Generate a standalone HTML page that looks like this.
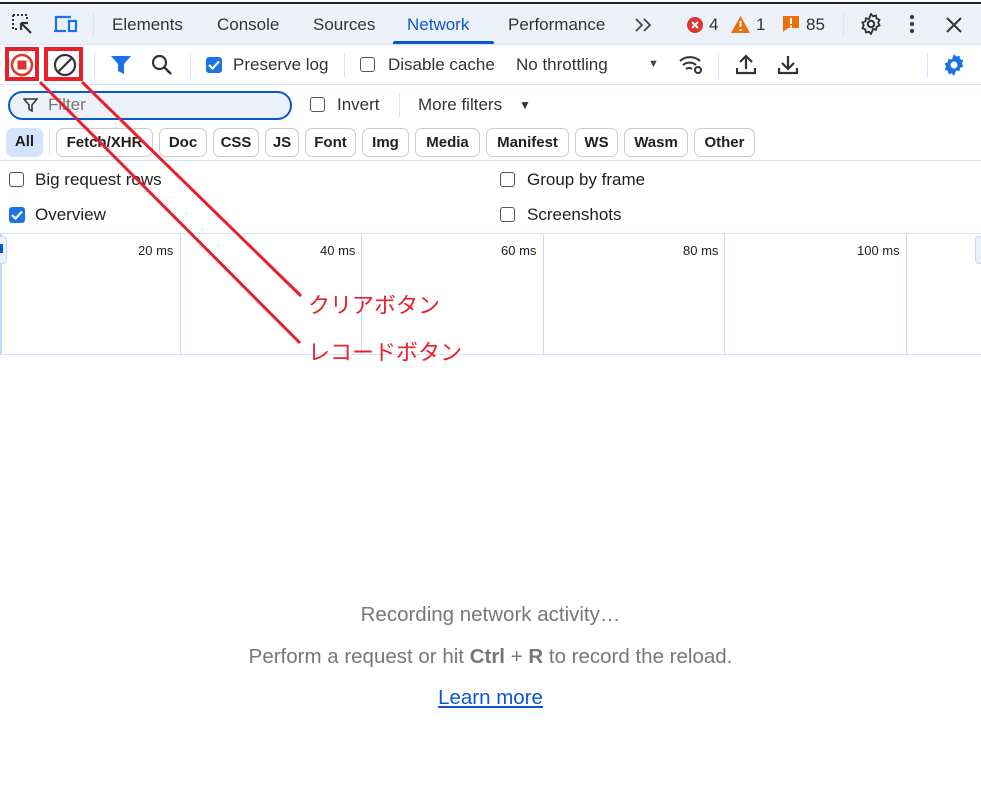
<!DOCTYPE html>
<html><head><meta charset="utf-8"><style>
body{margin:0;width:981px;height:800px;position:relative;overflow:hidden;background:#fff;font-family:"Liberation Sans","Noto Sans CJK JP",sans-serif;color:#1f1f1f}
.a{position:absolute;white-space:nowrap}
.t{font-size:17px}
.cb{position:absolute;width:15px;height:15px;border:1.5px solid #555;border-radius:3px;box-sizing:border-box}
.cbc{position:absolute;width:16px;height:16px;background:#1a73e8;border-radius:3px}
.chip{position:absolute;top:128px;height:29px;border:1px solid #ccc;border-radius:7px;box-sizing:border-box;font-size:15px;line-height:27px;text-align:center;font-weight:bold;color:#1f1f1f}
.sep{position:absolute;width:1px;background:#d3e3fd}
.vl{position:absolute;top:234px;height:120px;width:1px;background:#c6d8f7}
.ms{position:absolute;top:243px;font-size:13px}
</style></head><body>
<div class="a" style="left:0;top:2px;width:981px;height:2px;background:#222"></div>
<div class="a" style="left:0;top:4px;width:981px;height:40px;background:#edf2fa;border-bottom:1px solid #d3e3fd"></div>
<svg class="a" style="left:11px;top:13px" width="24" height="24" viewBox="0 0 24 24"><path d="M2 2h14v5M2 2v14h5" fill="none" stroke="#333" stroke-width="2" stroke-dasharray="2 2"/><path d="M10 10l10 10M10 10h7M10 10v7" stroke="#333" stroke-width="2.2" fill="none"/></svg>
<svg class="a" style="left:53px;top:14px" width="26" height="20" viewBox="0 0 26 20"><path d="M3 16V3h15" fill="none" stroke="#1a73e8" stroke-width="2.2"/><path d="M1 17h12" stroke="#1a73e8" stroke-width="2.2"/><rect x="16" y="7" width="7" height="10" fill="none" stroke="#1a73e8" stroke-width="2.2"/></svg>
<div class="sep" style="left:93px;top:13px;height:24px"></div>
<div class="a t" style="left:112px;top:15px;color:#333">Elements</div>
<div class="a t" style="left:217px;top:15px;color:#333">Console</div>
<div class="a t" style="left:313px;top:15px;color:#333">Sources</div>
<div class="a t" style="left:407px;top:15px;color:#0b57d0">Network</div>
<div class="a" style="left:393px;top:41px;width:101px;height:3px;background:#0b57d0;border-radius:2px 2px 0 0"></div>
<div class="a t" style="left:508px;top:15px;color:#333">Performance</div>
<svg class="a" style="left:634px;top:18px" width="18" height="14"><path d="M2 1l6 6-6 6M10 1l6 6-6 6" stroke="#444" stroke-width="1.8" fill="none"/></svg>
<svg class="a" style="left:687px;top:17px" width="16" height="16"><circle cx="8" cy="8" r="8" fill="#dc362e"/><path d="M5 5l6 6M11 5l-6 6" stroke="#fff" stroke-width="2"/></svg>
<div class="a t" style="left:709px;top:15px;color:#333">4</div>
<svg class="a" style="left:731px;top:16px" width="19" height="17"><path d="M9.5 0L19 17H0z" fill="#e8710a"/><path d="M9.5 5v6M9.5 13v2" stroke="#fff" stroke-width="2"/></svg>
<div class="a t" style="left:756px;top:15px;color:#333">1</div>
<svg class="a" style="left:783px;top:16px" width="16" height="17"><path d="M0 0h16v12H5l-5 4z" fill="#e8710a"/><path d="M8 2v6M8 9.5v2" stroke="#fff" stroke-width="2"/></svg>
<div class="a t" style="left:806px;top:15px;color:#333">85</div>
<div class="sep" style="left:843px;top:13px;height:24px"></div>
<svg class="a" style="left:860px;top:13px" width="22" height="22" viewBox="0 0 24 24"><path d="M12 1l2.2 2.6 3.3-.9.6 3.4 3.2 1.3-1.4 3.1 1.4 3.1-3.2 1.3-.6 3.4-3.3-.9L12 23l-2.2-2.6-3.3.9-.6-3.4-3.2-1.3L4.1 13.5 2.7 10.4l3.2-1.3.6-3.4 3.3.9z" fill="none" stroke="#333" stroke-width="2"/><circle cx="12" cy="12" r="3.5" fill="none" stroke="#333" stroke-width="2.2"/></svg>
<svg class="a" style="left:909px;top:14px" width="6" height="20"><circle cx="3" cy="3" r="2" fill="#333"/><circle cx="3" cy="10" r="2" fill="#333"/><circle cx="3" cy="17" r="2" fill="#333"/></svg>
<svg class="a" style="left:946px;top:17px" width="16" height="16"><path d="M1 1l14 14M15 1L1 15" stroke="#333" stroke-width="2"/></svg>
<div class="a" style="left:0;top:84px;width:981px;height:1px;background:#d3e3fd"></div>
<svg class="a" style="left:10px;top:53px" width="24" height="24"><circle cx="12" cy="12" r="10" fill="none" stroke="#dc362e" stroke-width="2.5"/><rect x="7.5" y="7.5" width="9" height="9" fill="#dc362e"/></svg>
<svg class="a" style="left:53px;top:53px" width="24" height="24"><circle cx="12" cy="12" r="10" fill="none" stroke="#333" stroke-width="2.2"/><path d="M5 19L19 5" stroke="#333" stroke-width="2.2"/></svg>
<div class="sep" style="left:94px;top:53px;height:24px"></div>
<svg class="a" style="left:111px;top:56px" width="20" height="18"><path d="M0 0h20l-7 8v10l-6-3V8z" fill="#1a73e8"/></svg>
<svg class="a" style="left:151px;top:54px" width="22" height="22"><circle cx="8.5" cy="8.5" r="6.5" fill="none" stroke="#333" stroke-width="2.2"/><path d="M13 13l7 7" stroke="#333" stroke-width="2.5"/></svg>
<div class="sep" style="left:190px;top:53px;height:24px"></div>
<div class="cbc" style="left:206px;top:57px"></div><svg class="a" style="left:206px;top:57px" width="16" height="16"><path d="M3 8l3.5 3.5L13 4.5" stroke="#fff" stroke-width="2.2" fill="none"/></svg>
<div class="a t" style="left:233px;top:55px;color:#333">Preserve log</div>
<div class="sep" style="left:344px;top:53px;height:24px"></div>
<div class="cb" style="left:360px;top:57px"></div>
<div class="a t" style="left:388px;top:55px;color:#333">Disable cache</div>
<div class="a t" style="left:516px;top:55px;color:#333">No throttling</div>
<div class="a" style="left:648px;top:58px;font-size:11px;color:#444">▼</div>
<svg class="a" style="left:678px;top:53px" width="26" height="22"><path d="M2 8a15 15 0 0 1 20 0M5 12a10 10 0 0 1 13 0M8 16a5 5 0 0 1 6 0" stroke="#333" stroke-width="2" fill="none"/><circle cx="20" cy="17" r="3" fill="none" stroke="#333" stroke-width="2"/></svg>
<div class="sep" style="left:718px;top:53px;height:24px"></div>
<svg class="a" style="left:736px;top:54px" width="20" height="21"><path d="M10 15V2M4 8l6-6 6 6M1 14v5h18v-5" stroke="#333" stroke-width="2.2" fill="none"/></svg>
<svg class="a" style="left:778px;top:54px" width="20" height="21"><path d="M10 2v13M4 9l6 6 6-6M1 14v5h18v-5" stroke="#333" stroke-width="2.2" fill="none"/></svg>
<div class="sep" style="left:927px;top:53px;height:24px"></div>
<svg class="a" style="left:942px;top:53px" width="24" height="24" viewBox="0 0 24 24"><path d="M12 1l2.2 2.6 3.3-.9.6 3.4 3.2 1.3-1.4 3.1 1.4 3.1-3.2 1.3-.6 3.4-3.3-.9L12 23l-2.2-2.6-3.3.9-.6-3.4-3.2-1.3L4.1 13.5 2.7 10.4l3.2-1.3.6-3.4 3.3.9z" fill="#1a73e8"/><circle cx="12" cy="12" r="3.5" fill="#fff"/></svg>
<div class="a" style="left:8px;top:91px;width:284px;height:29px;border:2.5px solid #0b57d0;border-radius:15px;box-sizing:border-box;background:#edf2fa"></div>
<svg class="a" style="left:23px;top:98px" width="15" height="14"><path d="M1 1h13l-5 6v6l-3-2V7z" stroke="#333" stroke-width="1.6" fill="none"/></svg>
<div class="a t" style="left:48px;top:95px;color:#777">Filter</div>
<div class="cb" style="left:310px;top:97px"></div>
<div class="a t" style="left:337px;top:95px;color:#333">Invert</div>
<div class="sep" style="left:399px;top:93px;height:24px"></div>
<div class="a t" style="left:418px;top:95px;color:#333">More filters</div>
<div class="a" style="left:519px;top:98px;font-size:12px;color:#333">▼</div>
<div class="chip" style="left:6px;width:37px;border:none;background:#d3e3fd">All</div>
<div class="sep" style="left:49px;top:131px;height:24px"></div>
<div class="chip" style="left:56px;width:97px">Fetch/XHR</div>
<div class="chip" style="left:159px;width:48px">Doc</div>
<div class="chip" style="left:213px;width:46px">CSS</div>
<div class="chip" style="left:265px;width:34px">JS</div>
<div class="chip" style="left:305px;width:51px">Font</div>
<div class="chip" style="left:362px;width:47px">Img</div>
<div class="chip" style="left:415px;width:65px">Media</div>
<div class="chip" style="left:486px;width:83px">Manifest</div>
<div class="chip" style="left:575px;width:43px">WS</div>
<div class="chip" style="left:624px;width:64px">Wasm</div>
<div class="chip" style="left:694px;width:61px">Other</div>
<div class="a" style="left:0;top:160px;width:981px;height:1px;background:#d3e3fd"></div>
<div class="cb" style="left:9px;top:172px"></div>
<div class="a t" style="left:35px;top:170px">Big request rows</div>
<div class="cb" style="left:500px;top:172px"></div>
<div class="a t" style="left:527px;top:170px">Group by frame</div>
<div class="cbc" style="left:9px;top:207px"></div><svg class="a" style="left:9px;top:207px" width="16" height="16"><path d="M3 8l3.5 3.5L13 4.5" stroke="#fff" stroke-width="2.2" fill="none"/></svg>
<div class="a t" style="left:35px;top:205px">Overview</div>
<div class="cb" style="left:500px;top:207px"></div>
<div class="a t" style="left:527px;top:205px">Screenshots</div>
<div class="a" style="left:0;top:233px;width:981px;height:1px;background:#d3e3fd"></div>
<div class="a" style="left:0;top:354px;width:981px;height:1px;background:#d3e3fd"></div>
<div class="vl" style="left:0;width:2px"></div>
<div class="a" style="left:0;top:236px;width:6px;height:26px;border:1px solid #c6d8f7;border-left:none;border-radius:0 4px 4px 0;background:#edf2fa"></div>
<div class="a" style="left:0;top:244px;width:3px;height:9px;background:#0b57d0"></div>
<div class="a" style="left:975px;top:236px;width:6px;height:26px;border:1px solid #c6d8f7;border-right:none;border-radius:4px 0 0 4px;background:#edf2fa"></div>
<div class="vl" style="left:180px"></div><div class="vl" style="left:361px"></div><div class="vl" style="left:543px"></div><div class="vl" style="left:724px"></div><div class="vl" style="left:906px"></div>
<div class="ms" style="left:138px">20 ms</div>
<div class="ms" style="left:320px">40 ms</div>
<div class="ms" style="left:501px">60 ms</div>
<div class="ms" style="left:683px">80 ms</div>
<div class="ms" style="left:857px">100 ms</div>
<div class="a" style="left:0;width:981px;top:603px;text-align:center;font-size:20.5px;color:#777">Recording network activity…</div>
<div class="a" style="left:0;width:981px;top:645px;text-align:center;font-size:20.5px;color:#777">Perform a request or hit <b>Ctrl</b> + <b>R</b> to record the reload.</div>
<div class="a" style="left:0;width:981px;top:686px;text-align:center;font-size:20.5px;color:#0b57d0;text-decoration:underline">Learn more</div>
<div class="a" style="left:5px;top:47px;width:34px;height:34px;border:4px solid #e8202a;box-sizing:border-box"></div>
<div class="a" style="left:44px;top:47px;width:39px;height:34px;border:4px solid #e8202a;box-sizing:border-box"></div>
<svg class="a" style="left:0;top:0" width="981" height="400"><path d="M40 82L300 343M82 82L301 296" stroke="#e8202a" stroke-width="3"/></svg>
<div class="a" style="left:308px;top:288px;font-size:22px;color:#e8202a">クリアボタン</div>
<div class="a" style="left:308px;top:335px;font-size:22px;color:#e8202a">レコードボタン</div>
</body></html>
